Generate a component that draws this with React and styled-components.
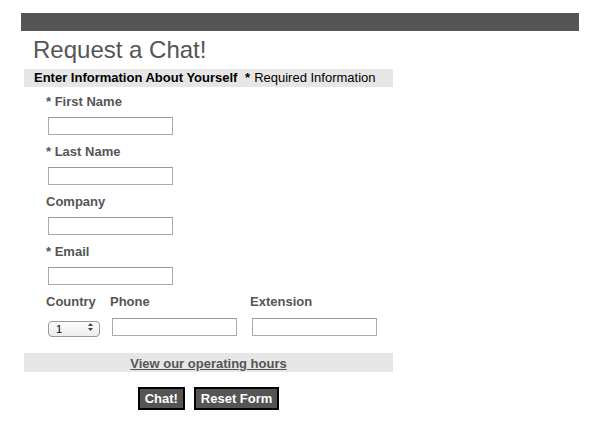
import React, { useState } from "react";
import styled, { createGlobalStyle } from "styled-components";

const GlobalStyle = createGlobalStyle`
  html, body {
    margin: 0;
    padding: 0;
    background: #fff;
    font-family: "Liberation Sans", Arial, Helvetica, sans-serif;
  }
`;

const Page = styled.div`
  width: 558px;
  padding: 13px 0 0 21px;
`;

const TopBar = styled.div`
  height: 18px;
  background-color: #555;
`;

const Title = styled.h1`
  margin: 0 0 0 12px;
  font-size: 24px;
  line-height: 38px;
  font-weight: normal;
  color: #555;
`;

const Form = styled.form`
  width: 369px;
  margin-left: 3px;
`;

const SectionHeader = styled.div`
  height: 18px;
  line-height: 18px;
  padding-left: 10px;
  background-color: #e6e6e6;
  font-size: 13px;
  color: #000;
  b {
    margin-right: 4px;
  }
`;

const Fields = styled.div`
  display: flex;
  flex-direction: column;
  gap: 9px;
  padding: 7px 0 0 22px;
`;

const Field = styled.div`
  display: flex;
  flex-direction: column;
  gap: 7px;
`;

const Label = styled.label`
  font-size: 13px;
  line-height: 16px;
  font-weight: bold;
  color: #555;
`;

const TextInput = styled.input`
  box-sizing: border-box;
  width: ${({ $w }) => $w || 125}px;
  height: 18px;
  margin: 0 0 0 2px;
  padding: 1px 3px;
  border: 1px solid #a9a9a9;
  border-top-color: #999;
  font-size: 12px;
  background: #fff;
  outline: none;
`;

const Row = styled.div`
  display: grid;
  grid-template-columns: 64px 140px 130px;
  row-gap: 8px;
  align-items: center;
`;

const SelectWrap = styled.div`
  position: relative;
  width: 52px;
  height: 16px;
  margin-left: 2px;
`;

const Select = styled.select`
  appearance: none;
  box-sizing: border-box;
  width: 100%;
  height: 16px;
  padding: 0 0 0 7px;
  border: 1px solid #9a9a9a;
  border-radius: 4px;
  background: linear-gradient(#fdfdfd, #ececec);
  font-family: "Liberation Sans", Arial, sans-serif;
  font-size: 11px;
  color: #000;
  outline: none;
`;

const Arrows = styled.svg`
  position: absolute;
  right: 7px;
  top: 4px;
  pointer-events: none;
`;

const LinkBar = styled.div`
  margin-top: 17px;
  height: 19px;
  line-height: 19px;
  background-color: #e6e6e6;
  text-align: center;
`;

const HoursLink = styled.a`
  font-size: 13px;
  font-weight: bold;
  color: #555;
  text-decoration: underline;
  cursor: pointer;
`;

const Buttons = styled.div`
  display: flex;
  justify-content: center;
  gap: 9px;
  margin-top: 15px;
`;

const Button = styled.button`
  box-sizing: border-box;
  height: 23px;
  padding: 0 5px;
  border: 2px solid #000;
  background-color: #555;
  color: #fff;
  font-family: "Liberation Sans", Arial, sans-serif;
  font-size: 13px;
  font-weight: bold;
  cursor: pointer;
`;

const fields = [
  { id: "first", label: "* First Name" },
  { id: "last", label: "* Last Name" },
  { id: "company", label: "Company" },
  { id: "email", label: "* Email" },
];

export default function App() {
  const [values, setValues] = useState({});

  const update = (id) => (e) => setValues({ ...values, [id]: e.target.value });

  return (
    <>
      <GlobalStyle />
      <Page>
        <TopBar />
        <Title>Request a Chat!</Title>
        <Form onSubmit={(e) => e.preventDefault()} onReset={() => setValues({})}>
          <SectionHeader>
            <b>Enter Information About Yourself</b> <b>*</b>Required Information
          </SectionHeader>
          <Fields>
            {fields.map((f) => (
              <Field key={f.id}>
                <Label htmlFor={f.id}>{f.label}</Label>
                <TextInput id={f.id} value={values[f.id] || ""} onChange={update(f.id)} />
              </Field>
            ))}
            <Row>
              <Label htmlFor="country">Country</Label>
              <Label htmlFor="phone">Phone</Label>
              <Label htmlFor="ext">Extension</Label>
              <SelectWrap>
                <Select id="country" defaultValue="1">
                  <option value="1">1</option>
                  <option value="44">44</option>
                </Select>
                <Arrows width="5" height="8" viewBox="0 0 5 8">
                  <path d="M2.5 0 L5 3 L0 3 Z M0 5 L5 5 L2.5 8 Z" fill="#444" />
                </Arrows>
              </SelectWrap>
              <TextInput id="phone" $w={125} value={values.phone || ""} onChange={update("phone")} />
              <TextInput id="ext" $w={125} value={values.ext || ""} onChange={update("ext")} />
            </Row>
          </Fields>
          <LinkBar>
            <HoursLink>View our operating hours</HoursLink>
          </LinkBar>
          <Buttons>
            <Button type="submit">Chat!</Button>
            <Button type="reset">Reset Form</Button>
          </Buttons>
        </Form>
      </Page>
    </>
  );
}
